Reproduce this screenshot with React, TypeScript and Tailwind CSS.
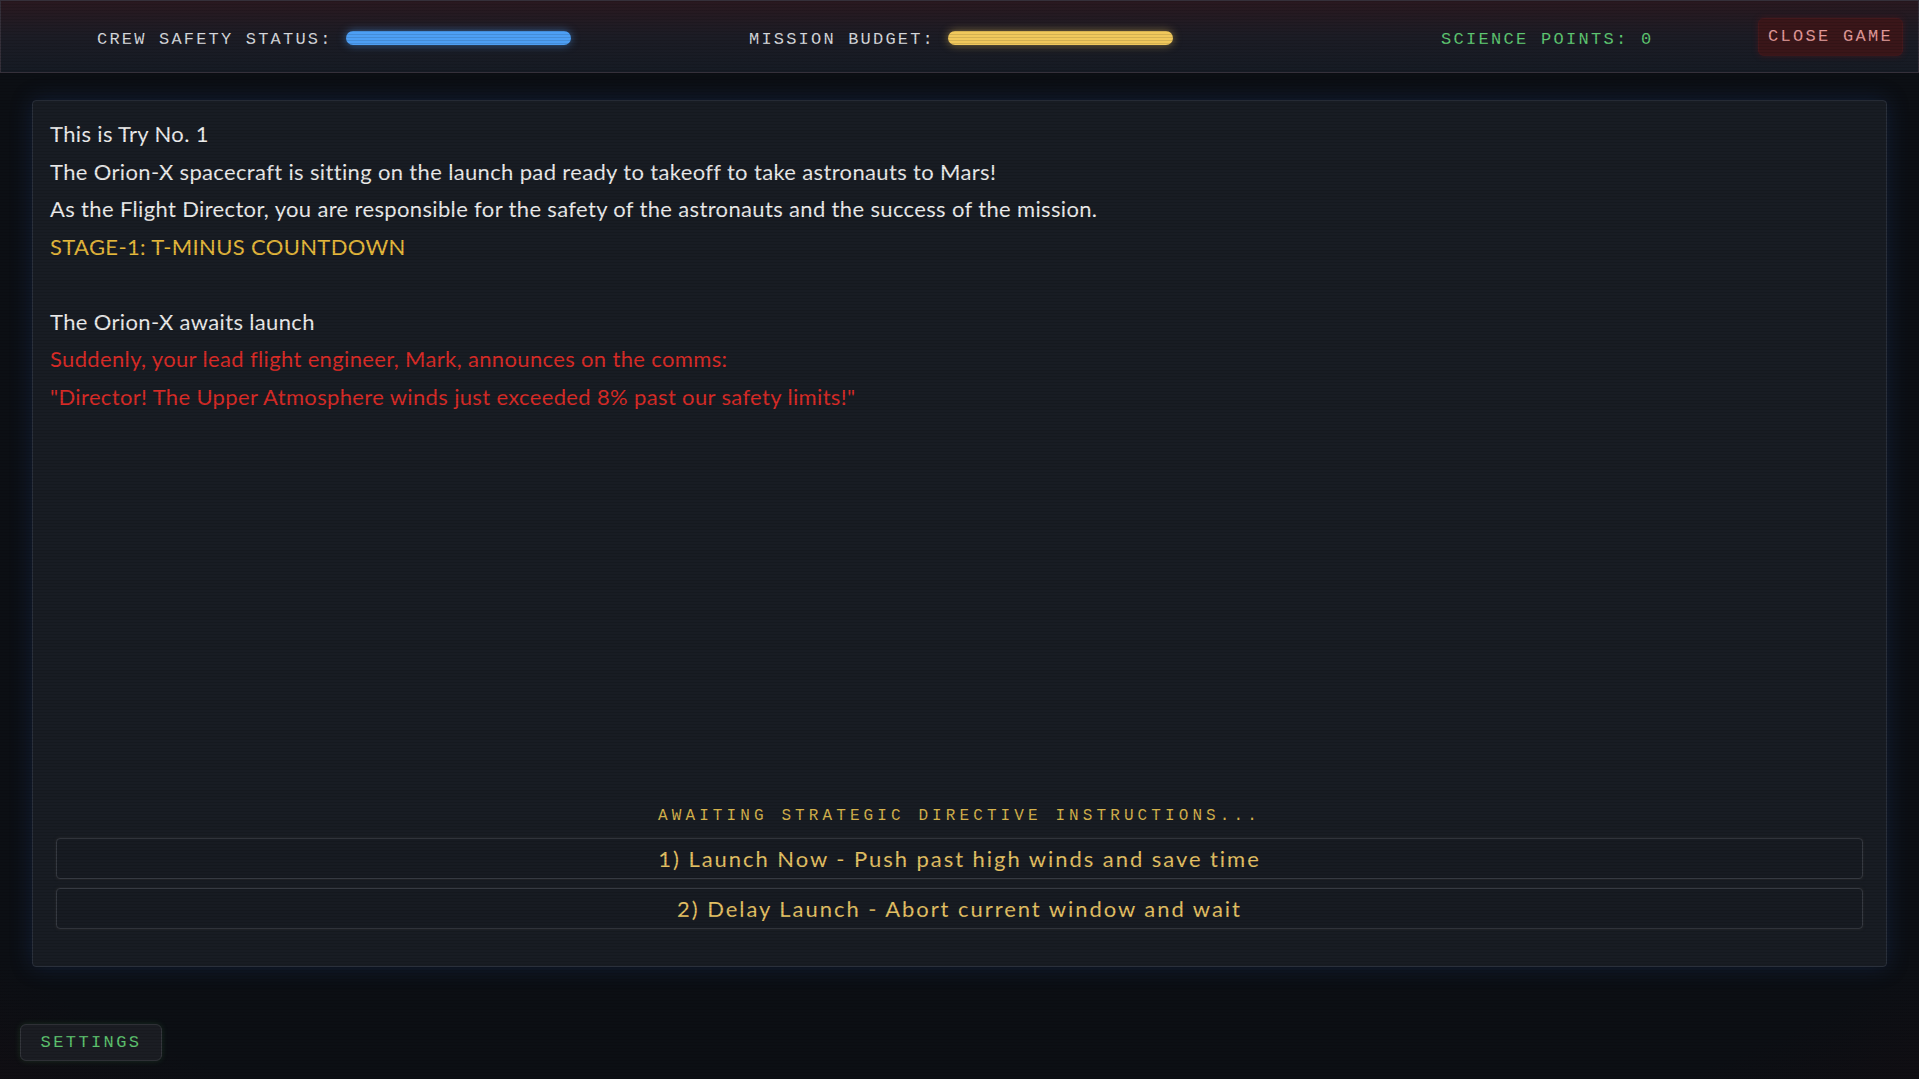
import React from "react";

const mono = { fontFamily: '"Liberation Mono", "DejaVu Sans Mono", monospace' };
const body = { fontFamily: 'Lato, "Liberation Sans", sans-serif' };

export default function App() {
  return (
    <div className="relative w-[1919px] h-[1079px] overflow-hidden bg-[radial-gradient(ellipse_95%_95%_at_50%_45%,#0c0f14_70%,#1d0d11_100%)]">
      {/* header */}
      <header className="h-[73px] pt-[7px] flex items-center border border-[#35303a] bg-[linear-gradient(180deg,#2a1920_0%,#1c1c25_50%,#161b24_100%)]" style={mono}>
        <div className="ml-[96px] w-[474px] flex items-center">
          <span className="text-[17px] tracking-[2.2px] text-[#d6d8dc]">CREW SAFETY STATUS:</span>
          <div className="ml-auto -mt-[4px] w-[225px] h-[14px] rounded-full bg-[#4d9ff5] shadow-[0_0_8px_rgba(77,159,245,0.55)]" />
        </div>
        <div className="ml-[178px] w-[424px] flex items-center">
          <span className="text-[17px] tracking-[2.2px] text-[#d6d8dc]">MISSION BUDGET:</span>
          <div className="ml-auto -mt-[4px] w-[225px] h-[14px] rounded-full bg-[#f0c85c] shadow-[0_0_8px_rgba(240,200,92,0.5)]" />
        </div>
        <div className="ml-[268px] w-[212px] flex items-center">
          <span className="text-[17px] tracking-[2.3px] text-[#5fc772] whitespace-nowrap">SCIENCE POINTS: 0</span>
        </div>
        <button className="ml-[105px] w-[145px] h-[38px] -mt-[6px] rounded-md bg-[#3a1619] border border-[#43191d] text-[17px] tracking-[2.3px] text-[#e39a99] shadow-[0_0_6px_rgba(120,20,25,0.35)]" style={mono}>
          CLOSE GAME
        </button>
      </header>

      {/* main panel */}
      <main className="mx-[32px] mt-[27px] h-[867px] rounded-[4px] border border-[#2a303b] bg-[#181c23] shadow-[0_0_22px_rgba(35,70,140,0.3)] flex flex-col pt-[14px] pb-[37px] px-[17px]">
        <div className="flex-1 text-[22px] tracking-[0.35px] leading-[37.5px] text-[#ebebeb]" style={body}>
          <p>This is Try No. 1</p>
          <p>The Orion-X spacecraft is sitting on the launch pad ready to takeoff to take astronauts to Mars!</p>
          <p>As the Flight Director, you are responsible for the safety of the astronauts and the success of the mission.</p>
          <p className="text-[#e6b93c]">STAGE-1: T-MINUS COUNTDOWN</p>
          <p>&nbsp;</p>
          <p>The Orion-X awaits launch</p>
          <p className="text-[#d92b27]">Suddenly, your lead flight engineer, Mark, announces on the comms:</p>
          <p className="text-[#d92b27]">"Director! The Upper Atmosphere winds just exceeded 8% past our safety limits!"</p>
        </div>
        <div className="px-[6px] flex flex-col">
          <div className="text-center text-[16px] leading-[24px] tracking-[4.1px] text-[#d4b14c]" style={mono}>
            AWAITING STRATEGIC DIRECTIVE INSTRUCTIONS...
          </div>
          <div className="mt-[10px] flex flex-col gap-[9px]">
            <button className="h-[41px] rounded-[4px] border border-[#363a42] bg-[#171b22] shadow-[0_0_3px_#2a2a2c] text-[22px] tracking-[1.95px] text-[#e4c164]" style={body}>
              1) Launch Now - Push past high winds and save time
            </button>
            <button className="h-[41px] rounded-[4px] border border-[#363a42] bg-[#171b22] shadow-[0_0_3px_#2a2a2c] text-[22px] tracking-[1.95px] text-[#e4c164]" style={body}>
              2) Delay Launch - Abort current window and wait
            </button>
          </div>
        </div>
      </main>

      {/* settings */}
      <button className="ml-[20px] mt-[57px] w-[142px] h-[37px] rounded-md border border-[#34363c] bg-[#1b1d23] text-[17px] tracking-[2.4px] text-[#5ec46f] shadow-[0_0_6px_rgba(70,160,80,0.2)]" style={mono}>
        SETTINGS
      </button>

      {/* scanlines */}
      <div className="pointer-events-none absolute inset-0 bg-[repeating-linear-gradient(0deg,rgba(0,0,0,0.12)_0px,rgba(0,0,0,0.12)_1px,transparent_1px,transparent_3px)]" />
    </div>
  );
}
